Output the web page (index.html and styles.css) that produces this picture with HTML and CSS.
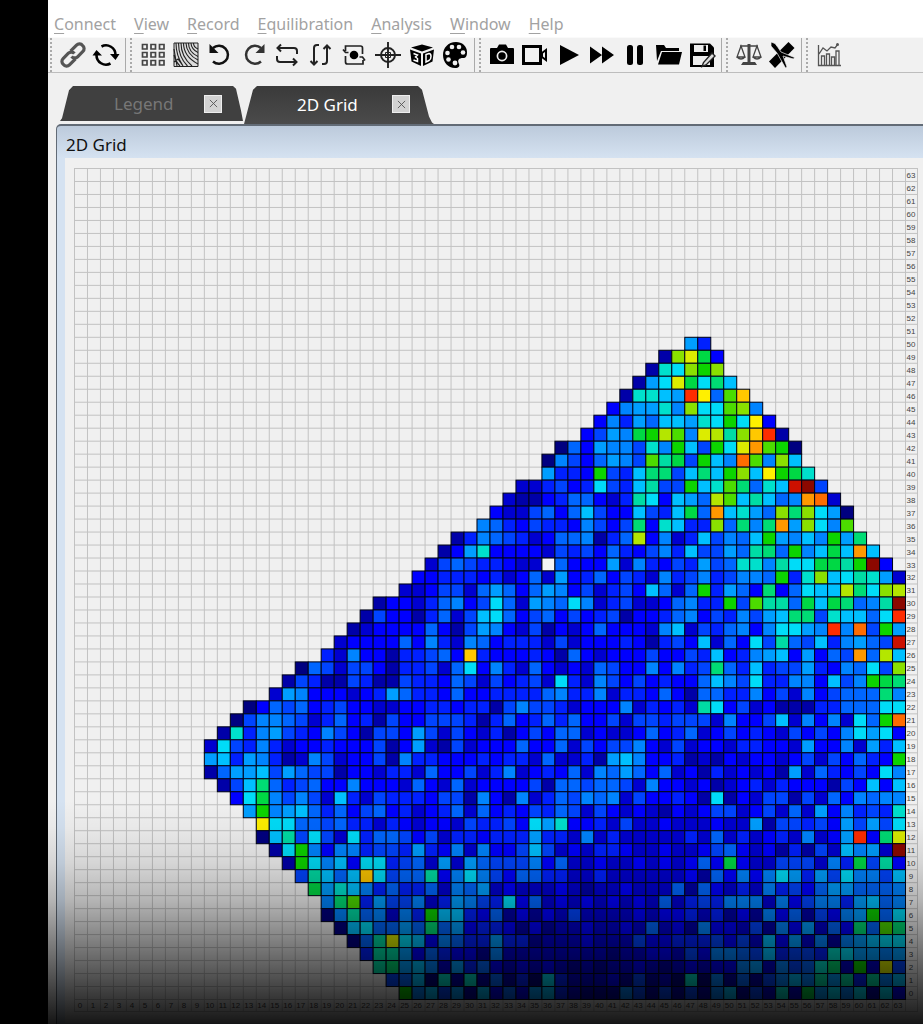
FILE: index.html
```html
<!DOCTYPE html>
<html lang="en">
<head>
<meta charset="utf-8">
<title>2D Grid</title>
<link rel="stylesheet" href="styles.css">
</head>
<body>
<main class="app">
  <nav class="menu" aria-label="Main menu">
    <button><u>C</u>onnect</button>
    <button><u>V</u>iew</button>
    <button><u>R</u>ecord</button>
    <button><u>E</u>quilibration</button>
    <button><u>A</u>nalysis</button>
    <button><u>W</u>indow</button>
    <button><u>H</u>elp</button>
  </nav>

  <div class="toolbar" role="toolbar" aria-label="Tools">
    <div class="group group-link">
      <button aria-label="Link"><svg viewBox="0 0 26 26"><g transform="rotate(-45 13 13)" fill="none" stroke="#555" stroke-width="3.2"><path d="M12 17.500H3.500a4 4 0 0 1-4-4.500 4 4 0 0 1 4-4.500H11a4 4 0 0 1 4 4.500"/><path d="M14 8.500h8.500a4 4 0 0 1 4 4.500 4 4 0 0 1-4 4.500H15a4 4 0 0 1-4-4.500"/></g></svg></button>
      <button aria-label="Refresh"><svg viewBox="0 0 26 26"><g fill="none" stroke="#000" stroke-width="2.600"><path d="M8.500 4.500A9.500 9.500 0 0 1 22.500 13"/><path d="M17.500 21.500A9.500 9.500 0 0 1 3.500 13"/></g><path d="M17 12h9.500l-4 6zM-.5 13.500H9L3.500 8z"/></svg></button>
    </div>
    <div class="group group-view">
      <button aria-label="Matrix"><svg viewBox="0 0 26 26"><g fill="none" stroke="#444" stroke-width="1.700"><path d="M2.500 2.500h4.500v4.500H2.500zM11 2.500h4.500v4.500H11zM19.500 2.500H24v4.500h-4.500zM2.500 10.500h4.500V15H2.500zM11 10.500h4.500V15H11zM19.500 10.500H24V15h-4.500zM2.500 18.500h4.500V23H2.500zM11 18.500h4.500V23H11zM19.500 18.500H24V23h-4.500z"/></g></svg></button>
      <button aria-label="Contours"><svg viewBox="0 0 26 26"><path fill="#ddd" stroke="#222" d="M1 1h24v23.500H1z"/><g fill="none" stroke="#222" stroke-width="1.100"><path d="M3 1c0 9 3 17 7 23M5.500 1c0 9 3 17 9 23M8 1c0 8 4 17 11 23M10.500 1c0 8 5 16 14.500 21M13 1c0 7 5 14 12 17M15.500 1c0 6 4 11 9.500 13.500M18 1c0 4 3 8 7 9.500M20.500 1c0 3 2 5 4.500 6M1 7c1 6 2 12 3 17M1 13c1 4 3 8 6 11M1 20l4-3 5 7"/></g></svg></button>
      <button aria-label="Rotate left"><svg viewBox="0 0 26 26"><path d="M6 6.500a9 9 0 1 1 0 13.500" transform="translate(0 -.5)" fill="none" stroke="#111" stroke-width="2.500"/><path d="M2.500 2v9h9z" fill="#111"/></svg></button>
      <button aria-label="Rotate right"><svg viewBox="0 0 26 26"><path d="M20 6a9 9 0 1 0 0 13.500" fill="none" stroke="#333" stroke-width="2.500"/><path d="M23.500 2v9h-9z" fill="#333"/></svg></button>
      <button aria-label="Flip horizontally"><svg viewBox="0 0 26 26"><g fill="none" stroke="#222" stroke-width="2"><path d="M4 6h16q3 0 3 3v3M7 2.500L3.500 6 7 9.500M22 20H6q-3 0-3-3v-3M19 16.500l3.500 3.500-3.500 3.500"/></g></svg></button>
      <button aria-label="Flip vertically"><svg viewBox="0 0 26 26"><g fill="none" stroke="#222" stroke-width="2"><path d="M11 3H9Q6 3 6 6v16M2.500 19L6 22.500 9.500 19M14 22h2q3 0 3-3V4M15.500 7L19 3.500 22.500 7"/></g></svg></button>
      <button aria-label="Rotate region"><svg viewBox="0 0 26 26"><g fill="none" stroke="#222" stroke-width="1.700"><path d="M4.500 14v6q0 2 2 2H22v-4M21.500 12V6q0-2-2-2H4.500v5M2 7.500L4.500 10.500h3M24 18.500L21.500 15h-3"/></g><circle cx="13" cy="13" r="4.300"/></svg></button>
      <button aria-label="Target"><svg viewBox="0 0 26 26"><g fill="none" stroke="#222" stroke-width="1.900"><circle cx="13" cy="13" r="7"/><path d="M13 0v26M0 13h26"/></g><path d="M10.500 10.500h5v5h-5z" fill="none" stroke="#222"/></svg></button>
      <button aria-label="3D view"><svg viewBox="0 0 26 26"><path d="M13 2.500l11 3-11 4-11-4zM1 7.500l11 4V24L2.500 19.500zM25 7.500l-11 4V24l9.500-4.500z"/><path d="M4.500 11.500l4 1.500-2 2 2 1.500v3l-4-1.500M17 12.500v7.500l3-1.500q2-1 2-4t-2-3z" fill="none" stroke="#fff" stroke-width="1.500"/></svg></button>
      <button aria-label="Palette"><svg viewBox="0 0 26 26"><path d="M14 0C6 0 1 6 1 13s5 13 12 13c4 0 5-2 4-4-2-4 0-6 4-6 3 0 4-2 4-6C25 4 20 0 14 0z"/><g fill="#f0f0f0"><circle cx="10" cy="5" r="2.300"/><circle cx="17" cy="5" r="2.300"/><circle cx="5.500" cy="11" r="2.300"/><circle cx="21" cy="10.500" r="2.300"/><circle cx="6.500" cy="17.500" r="2.300"/><circle cx="13" cy="21" r="2.400"/></g></svg></button>
    </div>
    <div class="group group-record">
      <button aria-label="Snapshot"><svg viewBox="0 0 26 26"><path d="M2 6h6l2-3.500h7L19 6h5q1 0 1 1v15H1V7q0-1 1-1z"/><circle cx="13" cy="14" r="4.600" fill="none" stroke="#eee" stroke-width="1.700"/></svg></button>
      <button aria-label="Video"><svg viewBox="0 0 26 26"><path d="M1.500 4.500h17v17h-17z" fill="none" stroke="#000" stroke-width="3"/><path d="M20 11l4-3v10l-4-3z" fill="none" stroke="#000" stroke-width="2"/></svg></button>
      <button aria-label="Play"><svg viewBox="0 0 26 26"><path d="M4 3l19 10L4 23z"/></svg></button>
      <button aria-label="Fast forward"><svg viewBox="0 0 26 26"><path d="M1 4.500l12 8.500L1 21.500zM13 4.500L25 13l-12 8.500z"/></svg></button>
      <button aria-label="Pause"><svg viewBox="0 0 26 26"><rect x="5" y="3" width="6" height="20" rx="2.500"/><rect x="15" y="3" width="6" height="20" rx="2.500"/></svg></button>
      <button aria-label="Open"><svg viewBox="0 0 26 26"><path d="M0 3h8l2 3h13v3H5L1 19zM6 10h20l-3 12.500H2z"/></svg></button>
      <button aria-label="Save as"><svg viewBox="0 0 26 26"><path d="M1 1.500h20l4 4V25H1z"/><path d="M5 3h14v7H5zM4 14h17v9H4z" fill="#eee"/><path d="M14.500 3.500H17V9h-2.500z"/><path d="M23 11l3 3-9 9-4 1.500 1.500-4z" fill="#ddd" stroke="#222" stroke-width="1.400"/></svg></button>
    </div>
    <div class="group group-balance">
      <button aria-label="Balance"><svg viewBox="0 0 26 26"><g fill="none" stroke="#444" stroke-width="1.300"><path d="M4 4h18M5 4L1 15h8zM21 4l-4 11h8zM1 15q4 4 8 0M17 15q4 4 8 0"/><path d="M13 2v20" stroke-width="3"/></g><path d="M7 20h12l2 3H5z" fill="#444"/></svg></button>
      <button aria-label="Calibration"><svg viewBox="0 0 26 26"><path d="M19.500 0l6 6L6 26l-6-6.500z"/><path d="M2 0l4 1.500 3 4 3 4.500 13.500 5.500-1 1.500-10.500-3 4 11-1.500 1L8 11 2 4z" stroke="#f0f0f0" stroke-width=".7"/></svg></button>
    </div>
    <div class="group group-chart">
      <button aria-label="Chart"><svg viewBox="0 0 26 26"><g fill="none" stroke="#555" stroke-width="1.300"><path d="M2.500 3v20.500H25M5.500 23v-9h3v9M10.500 23V12h3v11M15.500 23v-8h3v8M20 23V9h3v14M3 12l4-6 4 3 4-4 4 1 3-4"/></g><circle cx="21.500" cy="2.500" r="1.500" fill="#555"/></svg></button>
    </div>
  </div>

  <div class="tabs">
    <div class="tab tab-idle"><button class="tab-name">Legend</button><button class="close" aria-label="Close Legend"><svg viewBox="0 0 10 10"><path d="M1 1l8 8M9 1L1 9"/></svg></button></div>
    <div class="tab tab-active"><button class="tab-name">2D Grid</button><button class="close" aria-label="Close 2D Grid"><svg viewBox="0 0 10 10"><path d="M1 1l8 8M9 1L1 9"/></svg></button></div>
  </div>

  <section class="window">
    <h1 class="title">2D Grid</h1>
    <div class="plot">
      <svg class="map" id="map" viewBox="0 0 845 845" role="img" aria-label="Pressure map, 64 by 64 cells"></svg>
    </div>
  </section>
</main>
<div class="shade"></div>
<script src="map.js"></script>
</body>
</html>
```
FILE: styles.css
```css
* { box-sizing: border-box; }

body {
  margin: 0;
  position: relative;
  min-height: 100vh;
  padding-left: 48px;
  background: #000;
  font-family: "Noto Sans", "Open Sans", sans-serif;
  overflow-x: hidden;
}

button {
  margin: 0;
  padding: 0;
  border: 0;
  background: none;
  font: inherit;
  color: inherit;
}

.app {
  display: flex;
  flex-direction: column;
  min-height: 100vh;
  background: #f0f0f0;
}

.menu {
  display: flex;
  gap: 18px;
  height: 37px;
  padding: 11px 6px 1px;
  background: #fff;
  color: #a2a2a2;
  font-size: 16px;
  line-height: 24px;
}

.menu u {
  text-underline-offset: 3px;
  text-decoration-thickness: 1px;
}

.toolbar {
  display: flex;
  height: 36px;
  background: #f1f1f1;
  border-top: 1px solid #fafafa;
  border-bottom: 1px solid #bdbdbd;
}

.group {
  display: flex;
  padding: 0 2px 0 10px;
  border-right: 1px solid #aaa;
  background: radial-gradient(circle, #aaa 1px, transparent 1px) 3px 3px / 4px 4px repeat-y;
}

.group button {
  display: flex;
  flex: 1;
  align-items: center;
  justify-content: center;
}

.group svg {
  width: 26px;
  height: 26px;
  flex: none;
  overflow: visible;
}

.group-link { width: 78px; padding-left: 8px; background-position-x: 1px; }
.group-view { width: 349px; }
.group-record { width: 247px; }
.group-balance { width: 80px; }
.group-chart { width: 46px; border-right: 0; }

.tabs {
  display: flex;
  align-items: flex-start;
  gap: 1px;
  height: 51px;
  padding: 13px 0 0 12px;
  font-size: 17px;
}

.tab {
  display: flex;
  align-items: center;
  justify-content: space-between;
  background: linear-gradient(#3a3a3a, #4b4b4b);
}

.tab-idle {
  width: 183px;
  height: 35px;
  padding: 0 21px 0 54px;
  color: #777;
  background: #404040;
  clip-path: polygon(0 100%, 2px 92%, 9px 12%, 13px 0, 173px 0, 176px 8%, 181px 70%, 100% 100%);
}

.tab-active {
  width: 190px;
  height: 38px;
  padding: 0 24px 2px 53px;
  color: #fff;
  clip-path: polygon(0 100%, 2px 80%, 9px 10%, 13px 0, 174px 0, 178px 10%, 185px 80%, 188px 96%, 100% 100%);
}

.close {
  display: grid;
  place-items: center;
  width: 18px;
  height: 18px;
  border: 1px solid #eee;
  background: #d2d2d2;
}

.close svg {
  width: 9px;
  height: 9px;
  fill: none;
  stroke: #555;
}

.window {
  flex: 1;
  margin-left: 8px;
  padding-left: 8px;
  border-top: 2px solid #626b76;
  border-left: 1px solid #626b76;
  border-top-left-radius: 5px;
  background: linear-gradient(#bccadb, #d5e2f1 32px);
}

.title {
  margin: 0;
  height: 32px;
  padding: 7px 1px 0;
  font-size: 17px;
  font-weight: 400;
  line-height: 24px;
  color: #111;
}

.plot {
  padding: 10px 5px 11px 9px;
  background: #f0f0f0;
}

.map {
  display: block;
  width: 100%;
  font-family: "Liberation Sans", sans-serif;
  font-size: 8px;
}

.map text {
  text-anchor: middle;
  fill: #444;
}

.lines {
  fill: none;
  stroke: #c2c2c2;
  stroke-width: 1;
}

.cells rect {
  stroke: #000418;
  stroke-width: 1;
}

.shade {
  position: absolute;
  right: 0;
  bottom: 0;
  left: 0;
  height: 224px;
  pointer-events: none;
  background: linear-gradient(transparent, rgb(0 0 0 / 3%) 12%, rgb(0 0 0 / 11%) 28%, rgb(0 0 0 / 25%) 45%, rgb(0 0 0 / 43%) 60%, rgb(0 0 0 / 60%) 74%, rgb(0 0 0 / 77%) 88%, rgb(0 0 0 / 91%));
}
```
FILE: map.js
```js
const palette = {
  a: "#000080", b: "#0000a8", c: "#0000d0", d: "#0000ff", e: "#0020ff",
  f: "#0044ff", g: "#0066ff", h: "#0084ff", i: "#009eff", j: "#00c0ff",
  k: "#00dcf8", l: "#00e0cc", m: "#00dca4", n: "#00dc74", o: "#00d844",
  p: "#0cd400", q: "#4cdc00", r: "#8ae000", s: "#b4e600", t: "#dcec00",
  u: "#fff000", v: "#ffc800", w: "#ff9800", x: "#ff6c00", y: "#ff2c00",
  z: "#cc1000", Z: "#8c0800", W: "#f4f4f4"
};

// First filled column and the levels from there in groups of ten, rows 50 down to 0.
const rows = [
  [47, "ie"],
  [45, "brtod"],
  [44, "blkrpr"],
  [43, "biktoknj"],
  [42, "blljiyugqv"],
  [41, "dhiilhrkkq rh"],
  [40, "dheigjjilk pkud"],
  [39, "dfihopsqht smrvyb"],
  [37, "agdihhflhp jfpktwqpa"],
  [36, "ahfdgihfqm ofpjhxqhrj"],
  [36, "ieedpfejnn fjnjprjupo l"],
  [34, "ccefdekfej mffpjlqngl jzZf"],
  [33, "cbbdeggdce mkdjigsqjm jghwxc"],
  [32, "dccfgdgjfd djfejogwjl igrnrkia"],
  [31, "hgedfeedhf dfndljeerg nhnwirkhq"],
  [29, "behgfecdgg hbegsdhcej fhgjpihjhp in"],
  [28, "bdilddddcf efdgedfhej ffigmngphj ojwj"],
  [27, "cfgfeedccW gdddichedf eifgllhmkk oompZd"],
  [26, "ddeeedecdg cidegdfech efhefhhgpe lrjkmlic"],
  [25, "ccdffcgigd gihdfcefdj gcgpeigdnd gkjjsnkrs"],
  [23, "bddceghdfk gcihgkhcef ccdgheepfq mmgojonghm Z"],
  [22, "bfddbegcfj kgdfgdfdef bddeghdfeh fijnnfljjg ky"],
  [21, "bcddddgdbf ihdcfbdcdg dddchjcfeg hdhkkihyhx fpi"],
  [20, "cddddgdhec hgdeeecfcd ddedbefdjc gdkfmgfjeh igfz"],
  [19, "echddbeefg dvedddedbg dcdddfddfe jdehijdidg fwgsj"],
  [17, "agfcffdbee fcgkdhecgd cdcgfddhdh efngejeffi edhgkfr"],
  [16, "bfebbfebbf eedgfcfdef ckechfdfde ddgjhfkeeh hdjfhpon"],
  [15, "cihdddcdei geedgddeee egheehceed gdbggeehdf chdfgggnh"],
  [13, "adgfgdefdd ccddeedeeb fhffecdddh cedecmkdfc dbbbeegggk k"],
  [12, "afhhgfcegd ebfddfffeb egdegegddf cffefffchd dfjchdhckg px"],
  [11, "blehifedhf dbffdifcfd cebdfdggcd ccdgdegcdf dedcfdfdhk ikd"],
  [10, "ckfehecdde dddfbdicbf cdddgddgcf dffhdcfcdd ceeddciddh ciej"],
  [10, "ijeihebchf cddfbheedd dedeecgcce bijhddebcb dcddcdfcfd gedp"],
  [10, "bgiijfigff bddceecgdd fcehcdedgc hgigdgcdbe cdcdbicged fdkh"],
  [11, "bfjngefgdd hdddcgdcgc ddddfbggfg gfchddcdbc decedddbfd jdj"],
  [12, "dkohfhfcje cfeeedffbh dbhcegfhgh cfddedbkbd cffbfcgdhg hh"],
  [13, "iphijgegdf gdecdegcgd edfegfcfdc dcbdcdffcd fcgcidhefe l"],
  [14, "ukkggfgeec edcddcfeef dkilddecfc cdcccdccib ffefdififk"],
  [14, "ajmfkfckeg gfdfceedee eieechcecc cccecgcecd echcdiydnt"],
  [15, "bkphdhheff eiedhchddf jfcdceedcc dccdfgdcdb ebfcjhicZ"],
  [16, "bpkhjdkkef gcicigfffh dgccdccdcd cdgdodccff fcheofmd"],
  [17, "fmjgjvkfgg mdhkhfdgge eccecccccc dbgdhdhkie ifkhhfj"],
  [18, "oiljhegeeg chgicdcccd cbccdcccgb gdcechefdg iigggh"],
  [19, "hnqeiffhce ihfekdgcdc dcdcdcgcef ehhhchdfhh eijgh"],
  [19, "ahmghchepj jedgbdbdcf ccccdcddec ebdbhdgbfd hipgk"],
  [20, "ajkggigngi deedbdbccd ccdcgcdbhd dcfbhdicgd ngqn"],
  [21, "agmtkjdhge eieebcccdc ccfddeeefd fcjdichbhi jkk"],
  [22, "emmidgeddb hccccccccb ccddcfdhhg fjeffelkii hi"],
  [23, "mnijhciegd cdcdcbcbcc dcbcdcddhi chfglncpct f"],
  [24, "fgjalblbgb eakecccdbf bcalahbgbf hjhmimemhj"],
  [25, "phjfibjdgd ijecbbbhfb fbfbhjbfcl coikhkbkd"]
];

const CELL = 13;
const SIZE = 64;
const map = document.getElementById("map");

let path = "";
for (let i = 0; i <= SIZE + 1; i++) {
  const p = i * CELL + (i > SIZE ? -0.5 : 0.5);
  const end = (SIZE + 1) * CELL;
  path += `M${p} 0V${end}M0 ${p}H${end}`;
}

let cells = "";
rows.forEach(([start, levels], i) => {
  [...levels.replaceAll(" ", "")].forEach((level, j) => {
    cells += `<rect x="${(start + j) * CELL + 0.5}" y="${(i + 13) * CELL + 0.5}" width="${CELL}" height="${CELL}" fill="${palette[level]}"/>`;
  });
});

let labels = "";
for (let i = 0; i < SIZE; i++) {
  const middle = i * CELL + 6;
  labels += `<text x="838" y="${middle + 4}">${SIZE - 1 - i}</text>`;
  labels += `<text x="${middle}" y="841">${i}</text>`;
}

map.innerHTML = `<path class="lines" d="${path}"/><g class="cells">${cells}</g>${labels}`;
```
